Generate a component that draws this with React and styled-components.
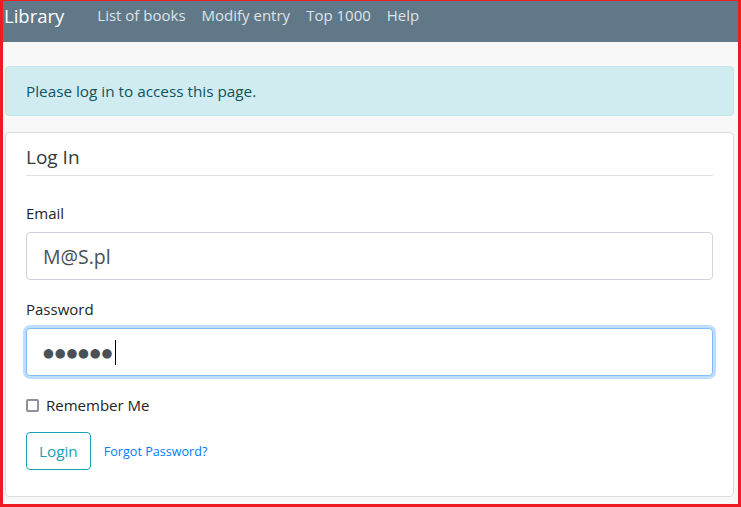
import React from 'react'
import styled, { createGlobalStyle } from 'styled-components'

const GlobalStyle = createGlobalStyle`
  html, body {
    margin: 0;
    padding: 0;
  }
  body {
    font-family: "Open Sans", "Noto Sans", sans-serif;
    color: #212529;
  }
  * {
    box-sizing: border-box;
  }
`;

const Frame = styled.div`
  width: 741px;
  height: 507px;
  border-style: solid;
  border-color: #ed1c24;
  border-width: 1px 3px 3px 3px;
  background: #f8f8f8;
  display: flex;
  flex-direction: column;
  overflow: hidden;
`;

const NavBar = styled.nav`
  height: 41px;
  background: #607888;
  display: flex;
  align-items: flex-start;
  padding: 2px 0 0 1px;
  flex-shrink: 0;
`;

const Brand = styled.a`
  color: #ffffff;
  font-size: 18.5px;
  line-height: 26px;
  margin-right: 25px;
  text-decoration: none;
`;

const NavLink = styled.a`
  color: #dde4e8;
  font-size: 15px;
  line-height: 24px;
  padding: 0 8px;
  text-decoration: none;
`;

const Content = styled.main`
  padding: 24px 4px 0 2px;
  display: flex;
  flex-direction: column;
  gap: 16px;
`;

const Alert = styled.div`
  background: #d1ecf1;
  border: 1px solid #bee5eb;
  border-radius: 4px;
  color: #0c5460;
  font-size: 15.3px;
  line-height: 22px;
  padding: 13px 20px 13px 20px;
`;

const Card = styled.section`
  background: #ffffff;
  border: 1px solid #dcdcdc;
  border-radius: 4px;
  padding: 10px 20px 26px 20px;
`;

const CardTitle = styled.h2`
  margin: 0;
  font-weight: 400;
  font-size: 19px;
  line-height: 28px;
  color: #343a40;
  padding-bottom: 4px;
  border-bottom: 1px solid #dee2e6;
`;

const Form = styled.form`
  display: flex;
  flex-direction: column;
  padding-top: 26px;
`;

const Group = styled.div`
  display: flex;
  flex-direction: column;
  margin-bottom: 18px;
`;

const Label = styled.label`
  font-size: 15px;
  line-height: 22px;
  color: #212529;
  margin-bottom: 8px;
`;

const Field = styled.div`
  height: 48px;
  border: 1px solid ${({ focused }) => (focused ? '#80bdff' : '#ced4da')};
  border-radius: 4px;
  box-shadow: ${({ focused }) => (focused ? '0 0 0 3px rgba(0, 123, 255, 0.25)' : 'none')};
  background: #fff;
  display: flex;
  align-items: center;
  padding: 0 16px;
  color: #495057;
  font-size: 19.5px;
`;

const FieldInput = styled.input`
  border: none;
  outline: none;
  background: transparent;
  font: inherit;
  color: inherit;
  padding: 0;
  width: 100%;
`;

const Dots = styled.span`
  font-family: "DejaVu Sans", sans-serif;
  font-size: 12.5px;
  letter-spacing: 0.8px;
  color: #495057;
`;

const Caret = styled.span`
  width: 1px;
  height: 25px;
  background: #000;
  margin-left: 2px;
`;

const CheckRow = styled.label`
  display: flex;
  align-items: center;
  gap: 7px;
  font-size: 15px;
  line-height: 22px;
  color: #212529;
  margin: 0 0 16px 0;
`;

const Check = styled.input`
  appearance: none;
  width: 13px;
  height: 13px;
  margin: 0;
  border: 2px solid #8f8f9d;
  border-radius: 2px;
  background: #fff;
`;

const Actions = styled.div`
  display: flex;
  align-items: center;
  gap: 13px;
`;

const OutlineButton = styled.button`
  height: 38px;
  padding: 0 12px;
  background: transparent;
  border: 1px solid #17a2b8;
  border-radius: 4px;
  color: #17a2b8;
  font-family: inherit;
  font-size: 15.3px;
`;

const SmallLink = styled.a`
  color: #007bff;
  font-size: 12.6px;
  text-decoration: none;
`;

const App = () => {
  return (
    <>
      <GlobalStyle />
      <Frame>
        <NavBar>
          <Brand href="#">Library</Brand>
          <NavLink href="#">List of books</NavLink>
          <NavLink href="#">Modify entry</NavLink>
          <NavLink href="#">Top 1000</NavLink>
          <NavLink href="#">Help</NavLink>
        </NavBar>
        <Content>
          <Alert>Please log in to access this page.</Alert>
          <Card>
            <CardTitle>Log In</CardTitle>
            <Form onSubmit={(e) => e.preventDefault()}>
              <Group>
                <Label>Email</Label>
                <Field>
                  <FieldInput type="email" defaultValue="M@S.pl" />
                </Field>
              </Group>
              <Group>
                <Label>Password</Label>
                <Field focused>
                  <Dots>●●●●●●</Dots>
                  <Caret />
                </Field>
              </Group>
              <CheckRow>
                <Check type="checkbox" />
                Remember Me
              </CheckRow>
              <Actions>
                <OutlineButton type="submit">Login</OutlineButton>
                <SmallLink href="#">Forgot Password?</SmallLink>
              </Actions>
            </Form>
          </Card>
        </Content>
      </Frame>
    </>
  )
}

export default App
